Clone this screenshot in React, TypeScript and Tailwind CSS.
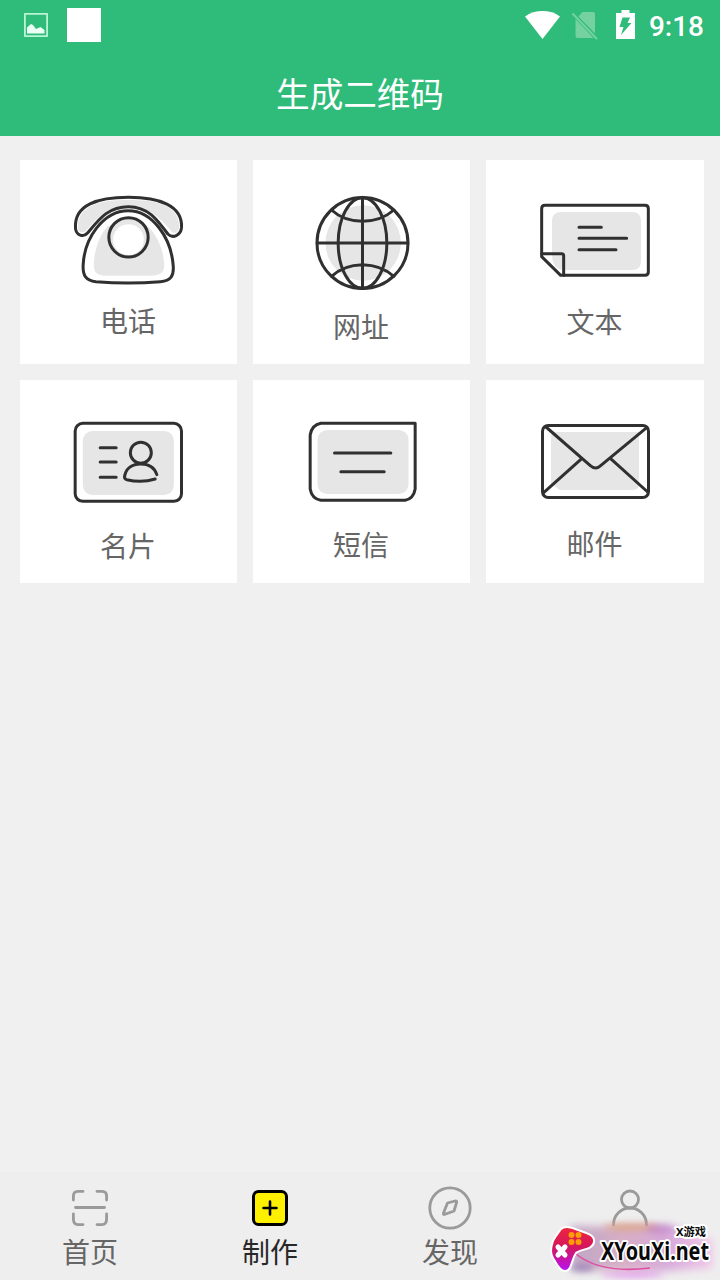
import type { ReactNode } from "react";

const ink = "#303030";
const shade = "#e6e6e6";

function Drawing({ viewBox, children }: { viewBox: string; children: ReactNode }) {
  return (
    <svg className="mt-[30px] h-[100px] w-[120px] shrink-0" viewBox={viewBox} fill="none" stroke={ink} strokeWidth="9" strokeLinecap="round" strokeLinejoin="round">
      {children}
    </svg>
  );
}

function PhoneIcon() {
  return (
    <Drawing viewBox="177.500 120 360 300">
      <path stroke="none" fill={shade} d="M204 228C207 165 270 150 356 150C442 150 505 165 508 228C508 248 494 255 483 242C445 194 410 170 356 170C302 170 267 194 229 242C215 253 203 245 204 228Z" />
      <path stroke="none" fill={shade} d="M294 228C270 255 254 295 252 342C251 366 260 376 288 377H427C454 376 464 366 463 342C460 295 441 257 417 232Z" />
      <path d="M197 235C192 164 265 142 356 142C447 142 519 166 515 233C513 256 489 267 474 252C442 208 414 170 356 170C294 170 267 209 233 249C220 264 199 255 197 235Z" />
      <path d="M355 182C279 182 224 266 220 344C218 377 228 392 258 395C310 399 400 399 452 395C483 392 493 378 490 346C484 266 430 182 355 182Z" />
      <circle cx="356" cy="262" r="59" fill={shade} />
      <circle cx="356" cy="269" r="46" fill="#fff" stroke="none" />
    </Drawing>
  );
}

function GlobeIcon() {
  return (
    <Drawing viewBox="169.500 120 360 300">
      <circle cx="353" cy="279" r="113" fill={shade} stroke="none" />
      <circle cx="351" cy="279" r="136.5" />
      <ellipse cx="351" cy="279" rx="73" ry="136" />
      <path d="M351 142V416M215 279H487M258 180Q294 213 351 214Q408 213 445 180M258 379Q294 345 351 344Q408 345 445 379" />
    </Drawing>
  );
}

function TextIcon() {
  return (
    <Drawing viewBox="165 120 360 300">
      <path stroke="none" fill={shade} d="M244 186H456Q483 186 483 213V333Q483 360 456 360H252V309H216V213Q216 186 244 186Z" />
      <path stroke="none" fill={shade} d="M216 311H250V360Q216 358 216 311Z" />
      <path d="M185 320V176Q185 166 195 166H495Q505 166 505 176V366Q505 376 495 376H242Z" />
      <path d="M185 311H245Q251 311 251 317V376M297 232H364M297 265H440M297 299H408" />
    </Drawing>
  );
}

function CardIcon() {
  return (
    <Drawing viewBox="177.500 105 360 300">
      <rect x="219" y="168" width="273" height="192" rx="29" fill={shade} stroke="none" />
      <rect x="196" y="145" width="319" height="234" rx="23" />
      <path d="M271 218H319M271 261H319M271 307H319" />
      <circle cx="393" cy="233" r="31.5" />
      <path d="M441 299C434 277 417 267 393 267C363 267 347 284 344 306Q344 312 351 314C376 320 410 320 436 312" />
    </Drawing>
  );
}

function SmsIcon() {
  return (
    <Drawing viewBox="169.500 105 360 300">
      <rect x="216" y="165" width="273" height="192" rx="29" fill={shade} stroke="none" />
      <path d="M226 145H509V342Q504 371 479 376H226Q199 371 194 342V180Q199 150 226 145Z" />
      <path d="M267 234H436M286 290H416" />
    </Drawing>
  );
}

function MailIcon() {
  return (
    <Drawing viewBox="165 105 360 300">
      <path stroke="none" fill={shade} d="M217 171H477V328Q477 345 458 345H239L213 326V184Z" />
      <rect x="187.500" y="151.500" width="318" height="216" rx="17" />
      <path d="M198 156L331 272Q347 286 362 272L501 157M306 250L191 353M391 250L503 351" />
    </Drawing>
  );
}

const tiles = [
  { label: "电话", icon: <PhoneIcon />, space: "mt-[10px]" },
  { label: "网址", icon: <GlobeIcon />, space: "mt-[16px]" },
  { label: "文本", icon: <TextIcon />, space: "mt-[11px]" },
  { label: "名片", icon: <CardIcon />, space: "mt-[15px]" },
  { label: "短信", icon: <SmsIcon />, space: "mt-[14px]" },
  { label: "邮件", icon: <MailIcon />, space: "mt-[13px]" },
];

function StatusBar() {
  return (
    <div className="flex h-[50px] items-center">
      <svg className="ml-6 h-6 w-6" viewBox="0 0 24 24" fill="none">
        <rect x="0.8" y="0.8" width="22.400" height="22.400" rx="1" stroke="#b9f5d3" strokeWidth="2" />
        <path fill="#ebfff4" d="M3 20.500V14.500L7 11L9 12L12 16L16.500 14L20.500 17V20.500Z" />
      </svg>
      <div className="ml-[19px] h-[34px] w-[34px] bg-white" />
      <svg className="ml-auto h-[28px] w-[35px]" viewBox="0 0 35 28">
        <path fill="#fff" d="M0 5.500C10-1.700 25-1.700 35 5.500L17.500 28Z" />
      </svg>
      <svg className="ml-3 h-[30px] w-[26px]" viewBox="0 0 26 30">
        <path fill="#75d2a0" d="M10.500 2H21Q23 2 23 4V23.500L6.500 6.500ZM3.500 9L21.500 28H5.500Q3.500 28 3.500 26Z" />
        <path stroke="#75d2a0" strokeWidth="2" d="M.5 3.500L25 29" />
      </svg>
      <svg className="ml-[18px] h-[30px] w-[19px]" viewBox="0 0 19 30">
        <path fill="#fff" d="M5.500 0H13.500V3H19V29H0V3H5.500Z" />
        <path fill="#2fbb79" d="M6.500 7.500H14L11.500 13H15.500L5 25L7.500 17H3.500Z" />
      </svg>
      <span className="mr-4 ml-[14px] pt-[3px] font-['Roboto'] text-[28px] leading-8 font-medium text-white">9:18</span>
    </div>
  );
}

function Watermark() {
  return (
    <div className="absolute right-0 bottom-0 h-[70px] w-[180px]">
      <svg className="h-full w-full" viewBox="0 0 180 70">
        <defs>
          <linearGradient id="pad" x1="0" y1="0" x2="0" y2="1">
            <stop offset="0" stopColor="#ed263c" />
            <stop offset=".45" stopColor="#d5165d" />
            <stop offset="1" stopColor="#b713f5" />
          </linearGradient>
          <linearGradient id="glow" x1="0" y1="0" x2="1" y2="0">
            <stop offset="0" stopColor="#b59ac0" />
            <stop offset=".35" stopColor="#d3a3bd" />
            <stop offset=".7" stopColor="#d49fd8" />
            <stop offset="1" stopColor="#f3bde6" />
          </linearGradient>
          <filter id="soft" x="-30%" y="-50%" width="160%" height="200%"><feGaussianBlur stdDeviation="4" /></filter>
          <filter id="fine" x="-30%" y="-80%" width="160%" height="260%"><feGaussianBlur stdDeviation="3" /></filter>
        </defs>
        <path fill="url(#glow)" opacity=".85" filter="url(#soft)" d="M30 16H132L172 30V58L115 62L32 60Z" />
        <ellipse cx="92" cy="17" rx="28" ry="4" fill="#d99a75" opacity=".7" filter="url(#fine)" />
        <ellipse cx="120" cy="19" rx="14" ry="5" fill="#b873c4" opacity=".5" filter="url(#fine)" />
        <ellipse cx="42" cy="58" rx="12" ry="4" fill="#7254a0" opacity=".45" filter="url(#fine)" />
        <ellipse cx="92" cy="65" rx="31" ry="3" fill="#df65f2" opacity=".5" filter="url(#fine)" />
        <path fill="none" stroke="#df4ea3" strokeWidth="1.600" d="M36 44C52 57 77 62 110 58" />
        <path fill="url(#pad)" stroke="#fff" strokeWidth="2" strokeLinejoin="round" d="M21 19C24 16 31 17 38 20C47 23 55 25 54 32C53 40 40 39 36 43C31 50 32 61 25 61C19 61 16 52 13 48C9 41 12 31 16 26Z" />
        <g fill="#ff9c08"><circle cx="31.500" cy="25" r="3" /><circle cx="38.500" cy="25" r="3" /><circle cx="31.500" cy="32" r="3" /><circle cx="38.500" cy="32" r="3" /></g>
        <path d="M18 37L25 45M25 37L18 45" stroke="#fff" strokeWidth="5" strokeLinecap="round" />
        <g fill="#090909" stroke="#fff" strokeLinejoin="round" paintOrder="stroke" fontWeight="700">
          <text className="font-['Noto_Sans','Noto_Sans_CJK_SC',sans-serif]" x="136" y="26" fontSize="11" strokeWidth="4" textLength="30" lengthAdjust="spacingAndGlyphs">X游戏</text>
          <text className="font-['Noto_Sans',sans-serif]" x="61" y="50" fontSize="24.500" strokeWidth="4" textLength="108" lengthAdjust="spacingAndGlyphs">XYouXi.net</text>
        </g>
      </svg>
    </div>
  );
}

const tabs = [
  {
    label: "首页",
    color: "text-[#666666]",
    icon: <path d="M5.400 14V10Q5.400 5.400 10 5.400H15M29 5.400H34Q38.600 5.400 38.600 10V14M38.600 28V33Q38.600 38.600 34 38.600H29M15 38.600H10Q5.400 38.600 5.400 33V28M7.500 21.500H36.500" />,
  },
  {
    label: "制作",
    color: "text-[#282828]",
    icon: (
      <g stroke="#000" strokeWidth="3">
        <rect x="5.500" y="5.500" width="33" height="33" rx="5" fill="#fff000" />
        <path d="M15.500 22H28.500M22 15.500V28.500" strokeWidth="2.600" />
      </g>
    ),
  },
  {
    label: "发现",
    color: "text-[#666666]",
    icon: (
      <>
        <circle cx="22" cy="22" r="20.200" />
        <path d="M19.500 17L27 15Q29 14.500 28.600 16.500L26 25L17 28.300Q15 29 15.500 27Z" />
      </>
    ),
  },
  {
    label: "",
    color: "text-[#666666]",
    icon: (
      <>
        <circle cx="22" cy="13.500" r="8.500" />
        <path d="M5.500 39C5.500 29 13 22 22 22S38.500 29 38.500 39" />
      </>
    ),
  },
];

export default function App() {
  return (
    <div className="relative flex h-[1280px] w-[720px] flex-col overflow-hidden bg-[#f0f0f0] font-['Noto_Sans_CJK_SC',sans-serif]">
      <header className="h-[136px] shrink-0 bg-[#2fbb79]">
        <StatusBar />
        <h1 className="pt-[18px] text-center text-[33.600px] leading-[50px] text-white">生成二维码</h1>
      </header>
      <main className="grid grid-cols-[217px_217px_218px] grid-rows-[204px_203px] gap-4 pt-6 pr-4 pl-5">
        {tiles.map((tile) => (
          <div key={tile.label} className="flex flex-col items-center bg-white">
            {tile.icon}
            <span className={`${tile.space} mr-px text-[28px] leading-10 text-[#666666]`}>{tile.label}</span>
          </div>
        ))}
      </main>
      <nav className="mt-auto grid h-[108px] grid-cols-4 bg-[#eeeeee]">
        {tabs.map((tab, index) => (
          <div key={index} className="flex flex-col items-center pt-[14px]">
            <svg className="h-11 w-11 shrink-0" viewBox="0 0 44 44" fill="none" stroke="#9a9a9a" strokeWidth="2.800" strokeLinecap="round" strokeLinejoin="round">
              {tab.icon}
            </svg>
            {tab.label && <span className={`mt-px text-[28px] leading-10 ${tab.color}`}>{tab.label}</span>}
          </div>
        ))}
      </nav>
      <Watermark />
    </div>
  );
}
